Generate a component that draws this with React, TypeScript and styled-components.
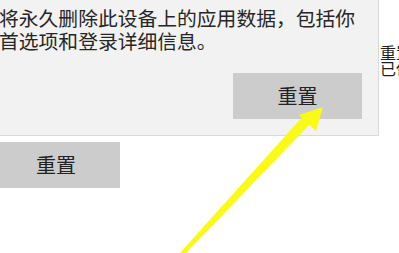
import React from "react";
import styled, { createGlobalStyle } from "styled-components";

const Global = createGlobalStyle`
  html, body { margin: 0; padding: 0; background: #ffffff; }
  body { width: 399px; height: 253px; overflow: hidden; font-family: "Noto Sans CJK SC", "Noto Sans", sans-serif; }
`;

const Page = styled.div`
  position: relative;
  width: 399px;
  height: 253px;
  overflow: hidden;
  background: #ffffff;
  display: flex;
`;

const LeftColumn = styled.div`
  width: 380px;
  flex: none;
  padding-top: 142px;
  margin-left: -8px;
`;

const RightColumn = styled.div`
  flex: none;
  width: 40px;
  padding-top: 44px;
  padding-left: 8px;
  color: #1f1f1f;
  font-size: 16px;
  line-height: 16px;
  white-space: nowrap;
`;

const Line = styled.div``;

const ResetButton = styled.button<{ $w: number; $h: number }>`
  width: ${(p) => p.$w}px;
  height: ${(p) => p.$h}px;
  border: none;
  padding: 0;
  margin: 0;
  background: #cccccc;
  color: #222222;
  font-family: "Noto Sans CJK SC", "Noto Sans", sans-serif;
  font-size: 20px;
  line-height: 1;
  display: flex;
  align-items: center;
  justify-content: center;
`;

const Flyout = styled.div`
  position: absolute;
  left: 0;
  top: 0;
  width: 378px;
  height: 135px;
  background: #f2f2f2;
  border-right: 1px solid #d9d9d9;
  border-bottom: 1px solid #d9d9d9;
  display: flex;
  flex-direction: column;
  box-sizing: content-box;
`;

const Message = styled.p`
  margin: 0 0 0 -1px;
  padding-top: 6px;
  font-size: 19.8px;
  line-height: 23px;
  color: #262626;
  white-space: nowrap;
`;

const Actions = styled.div`
  margin-top: auto;
  display: flex;
  justify-content: flex-end;
  padding: 0 16px 16px 0;
`;

const ArrowSvg = styled.svg`
  position: absolute;
  left: 0;
  top: 0;
  pointer-events: none;
`;

export default function App() {
  return (
    <>
      <Global />
      <Page>
        <LeftColumn>
          <ResetButton $w={128} $h={46}>重置</ResetButton>
        </LeftColumn>
        <RightColumn>
          <Line>重置</Line>
          <Line>已保存</Line>
        </RightColumn>
        <Flyout>
          <Message>
            将永久删除此设备上的应用数据，包括你
            <br />
            首选项和登录详细信息。
          </Message>
          <Actions>
            <ResetButton $w={129} $h={46}>重置</ResetButton>
          </Actions>
        </Flyout>
        <ArrowSvg width="399" height="253" viewBox="0 0 399 253">
          <defs>
            <filter id="blur" x="-10%" y="-10%" width="120%" height="120%">
              <feGaussianBlur stdDeviation="0.6" />
            </filter>
          </defs>
          <g filter="url(#blur)" fill="#fafa12">
            <polygon points="179,254 185,254 313,121 305,114" />
            <polygon points="323,107 299,115 316,131" />
          </g>
        </ArrowSvg>
      </Page>
    </>
  );
}
